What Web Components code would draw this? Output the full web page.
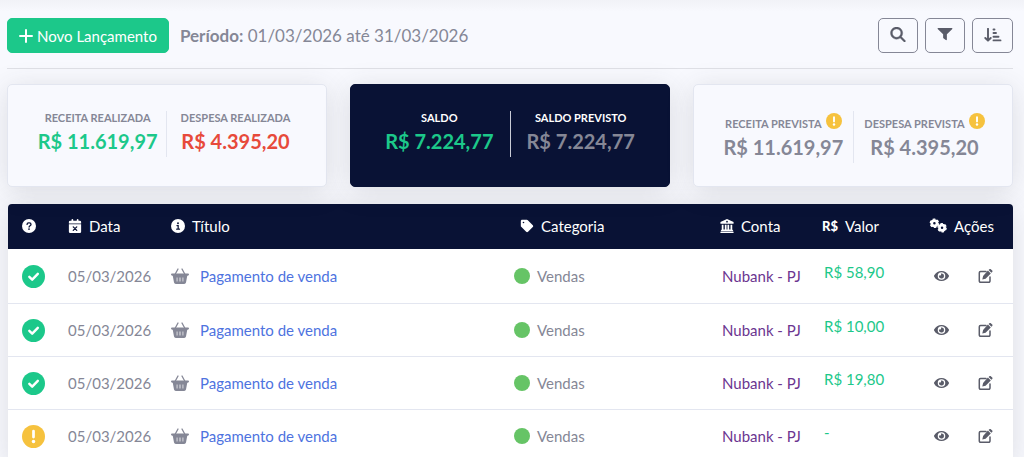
<!DOCTYPE html>
<html lang="pt-BR">
<head>
<meta charset="utf-8">
<title>Lançamentos</title>
<style>
body { margin: 0; background: #f8f9fe; font: 15px/24px Lato, "Open Sans", sans-serif; color: #858796; }
</style>
</head>
<body>
<finance-page></finance-page>
<script>
const ICONS = {
  plus: ['0 0 14 14', '<path d="M7 1v12M1 7h12" fill="none" stroke="currentColor" stroke-width="2" stroke-linecap="round"/>'],
  search: ['0 0 512 512', '<path d="M416 208c0 45.900-14.900 88.300-40 122.700L502.600 457.400c12.500 12.500 12.500 32.800 0 45.300s-32.800 12.500-45.300 0L330.700 376c-34.400 25.200-76.800 40-122.700 40C93.100 416 0 322.900 0 208S93.100 0 208 0S416 93.100 416 208zM208 352a144 144 0 1 0 0-288 144 144 0 1 0 0 288z" stroke="currentColor" stroke-width="12"/>'],
  filter: ['0 0 512 512', '<path d="M488 30H24C3 30-8 56 7 71l185 175v120c0 8 4 15 10 20l80 60c16 11 38 0 38-20V246L505 71c15-15 4-41-17-41z"/>'],
  sort: ['0 0 18 14', '<path d="M4 .8v11.500M1.300 10L4 12.700 6.700 10M9.500 1.500h1M9.500 5h2.500M9.500 8.700h5M9.500 12.400h7" fill="none" stroke="currentColor" stroke-width="1.900" stroke-linecap="round" stroke-linejoin="round"/>'],
  warn: ['0 0 16 16', '<circle cx="8" cy="8" r="8"/><path d="M8 4.200v4.200" stroke="#fff" stroke-width="1.900" stroke-linecap="round"/><circle cx="8" cy="11.500" r="1.200" fill="#fff"/>'],
  check: ['0 0 16 16', '<circle cx="8" cy="8" r="8"/><path d="M5.100 8.200l2 2L11 6.200" fill="none" stroke="#fff" stroke-width="1.700" stroke-linecap="round" stroke-linejoin="round"/>'],
  help: ['0 0 16 16', '<circle cx="8" cy="8" r="8"/><path d="M5.800 6.200c0-1 .7-1.700 1.700-1.700h1c1 0 1.800.7 1.800 1.700 0 1.500-2.200 1.600-2.200 3" fill="none" stroke="#091235" stroke-width="1.500" stroke-linecap="round"/><circle cx="8" cy="11.500" r="1" fill="#091235"/>'],
  info: ['0 0 16 16', '<circle cx="8" cy="8" r="8"/><circle cx="8" cy="4.800" r="1.100" fill="#091235"/><path d="M6.800 7.500H8.200v4M6.500 11.600h3.200" fill="none" stroke="#091235" stroke-width="1.400" stroke-linecap="round"/>'],
  calendar: ['0 0 14 16', '<path d="M3 1a1 1 0 0 1 2 0v1h4V1a1 1 0 0 1 2 0v1h1.500A1.500 1.500 0 0 1 14 3.500V5H0V3.500A1.500 1.500 0 0 1 1.500 2H3zM0 6h14v8.500a1.500 1.500 0 0 1-1.500 1.500h-11A1.500 1.500 0 0 1 0 14.500z"/><path d="M5 9l4 4M9 9l-4 4" stroke="#091235" stroke-width="1.500" stroke-linecap="round"/>'],
  tag: ['0 0 512 512', '<path fill-rule="evenodd" d="M30 252V78c0-26 21-48 48-48h174a48 48 0 0 1 34 14l182 182c19 19 19 49 0 68L294 468c-19 19-49 19-68 0L44 286a48 48 0 0 1-14-34zM128 96a30 30 0 1 0 0 60 30 30 0 1 0 0-60z"/>'],
  bank: ['0 0 16 16', '<path fill-rule="evenodd" d="M8 0l7.500 3.500V5.500H.5V3.500zM8 2a1 1 0 1 0 0 2 1 1 0 1 0 0-2zM2 6.500h2V12h1.500V6.500h2V12h1V6.500h2V12H12V6.500h2V12l1 1v1H1v-1l1-1zM.5 14.500h15V16H.5z"/>'],
  gears: ['0 0 20 16', '<g fill="none" stroke="currentColor"><circle cx="6" cy="5.500" r="2.900" stroke-width="3"/><circle cx="6" cy="5.500" r="4.600" stroke-width="1.400" stroke-dasharray="2.800 2.020"/><circle cx="14.500" cy="10.500" r="2.900" stroke-width="3"/><circle cx="14.500" cy="10.500" r="4.600" stroke-width="1.400" stroke-dasharray="2.800 2.020"/></g>'],
  basket: ['0 0 18 16', '<path d="M7 1L4 6.500M11 1l3 5.500" stroke="currentColor" stroke-width="1.300" stroke-linecap="round"/><path fill-rule="evenodd" d="M1 5.500h16a1 1 0 0 1 0 2l-.8.500-1.200 6.500A2 2 0 0 1 13 16H5a2 2 0 0 1-2-1.500L1.800 8 1 7.500a1 1 0 0 1 0-2zM5.700 9.500v4h.7v-4zM8.600 9.500v4h.8v-4zM11.600 9.500v4h.7v-4z"/>'],
  eye: ['0 0 576 512', '<path d="M572.520 241.400C518.290 135.590 410.930 64 288 64S57.680 135.640 3.480 241.410a32.350 32.350 0 0 0 0 29.190C57.710 376.410 165.070 448 288 448s230.320-71.640 284.520-177.410a32.350 32.350 0 0 0 0-29.190zM288 400a144 144 0 1 1 144-144 143.930 143.930 0 0 1-144 144zm0-240a95.310 95.310 0 0 0-25.310 3.790 47.850 47.850 0 0 1-66.900 66.900A95.780 95.780 0 1 0 288 160z"/>'],
  edit: ['0 0 14 14', '<path d="M7.500 2.500H2A1.200 1.200 0 0 0 .8 3.700v8.300A1.200 1.200 0 0 0 2 13.200h8.300a1.200 1.200 0 0 0 1.200-1.200V8" fill="none" stroke="currentColor" stroke-width="1.500" stroke-linecap="round"/><path d="M9.400 1.600l2.900 2.900-5.200 5.200-3.300.8.800-3.400zM10.100 1l.8-.8a1 1 0 0 1 1.400 0l1.400 1.400a1 1 0 0 1 0 1.400l-.8.800z"/>']
};

class AppIcon extends HTMLElement {
  connectedCallback() {
    if (this.shadowRoot) return;
    const [box, body] = ICONS[this.getAttribute('name')];
    this.attachShadow({ mode: 'open' }).innerHTML = `
      <style>
        :host { display: inline-block; flex: none; width: var(--icon-w, 14px); height: var(--icon-h, 14px); }
        svg { display: block; width: 100%; height: 100%; fill: currentColor; }
      </style>
      <svg viewBox="${box}" aria-hidden="true">${body}</svg>`;
  }
}
customElements.define('app-icon', AppIcon);

class PeriodToolbar extends HTMLElement {
  constructor() {
    super();
    this.attachShadow({ mode: 'open' }).innerHTML = `
      <style>
        :host { display: flex; align-items: center; padding-bottom: 15px; border-bottom: 1px solid #dfe0e6; }
        button { font: inherit; height: 35px; border-radius: 5px; box-sizing: border-box; display: flex; align-items: center; justify-content: center; cursor: pointer; }
        .new { background: #1cc88a; border: 1px solid #1cc88a; color: #fff; padding: 0 11px; gap: 4px; white-space: nowrap; }
        .period { flex: 1; margin: 0 11px; font-size: 17px; }
        .tools { display: flex; gap: 7px; }
        .tools button { width: 40px; background: transparent; border: 1px solid #858796; color: #5a5c69; padding: 0 0 2px; --icon-w: 16px; --icon-h: 15px; }
        .tools .sort { width: 41px; --icon-w: 18px; --icon-h: 14px; }
      </style>
      <button class="new" type="button"><app-icon name="plus"></app-icon><span>Novo Lançamento</span></button>
      <div class="period"><slot></slot></div>
      <div class="tools">
        <button type="button" aria-label="Pesquisar"><app-icon name="search"></app-icon></button>
        <button type="button" aria-label="Filtrar"><app-icon name="filter"></app-icon></button>
        <button class="sort" type="button" aria-label="Ordenar"><app-icon name="sort"></app-icon></button>
      </div>`;
  }
}
customElements.define('period-toolbar', PeriodToolbar);

class SummaryCard extends HTMLElement {
  constructor() {
    super();
    this.attachShadow({ mode: 'open' }).innerHTML = `
      <style>
        :host { display: flex; justify-content: center; align-items: flex-start; min-width: 0; box-sizing: border-box; padding: 26px 0 23px;
          background: #f8f9fe; border: 1px solid #e3e6f0; border-radius: 5px; box-shadow: 0 4px 28px rgba(58, 59, 69, .15); --divider: #e3e6f0; }
        :host([dark]) { background: #091235; border-color: #091235; --label: #fff; --divider: #c9cbd6; }
      </style>
      <slot></slot>`;
  }
}
customElements.define('summary-card', SummaryCard);

class MoneyFigure extends HTMLElement {
  constructor() {
    super();
    this.attachShadow({ mode: 'open' }).innerHTML = `
      <style>
        :host { display: block; text-align: center; white-space: nowrap; padding: 0 8px 0 14px; }
        :host(:last-child) { border-left: 1px solid var(--divider); padding: 0 20px 0 14px; }
        :host([notice]) { padding: 0 10px 0 12px; }
        :host([notice]:last-child) { padding: 0 10px; }
        :host([wide]), :host([wide]:last-child) { padding: 0 16px; }
        .label { display: flex; justify-content: center; align-items: center; gap: 4px; min-height: 14px; font-size: 11px; line-height: 14px; font-weight: 700; color: var(--label, inherit); }
        :host([notice]) .label { align-items: flex-end; height: 20px; }
        app-icon { --icon-w: 16px; --icon-h: 16px; color: #f6c23e; align-self: flex-start; margin-top: 2px; }
        .value { font-size: 20px; line-height: 24px; font-weight: 700; padding: 4px 0; color: var(--value, inherit); }
        :host([tone="in"]) { --value: #1cc88a; }
        :host([tone="out"]) { --value: #e74a3b; }
      </style>
      <div class="label"><slot name="label"></slot>${this.hasAttribute('notice') ? '<app-icon name="warn"></app-icon>' : ''}</div>
      <div class="value"><slot></slot></div>`;
  }
}
customElements.define('money-figure', MoneyFigure);

const ENTRIES = [
  ['check', 'R$ 58,90'],
  ['check', 'R$ 10,00'],
  ['check', 'R$ 19,80'],
  ['warn', '-']
];

class EntryTable extends HTMLElement {
  constructor() {
    super();
    const row = ([status, value]) => `
      <tr>
        <td><app-icon class="${status}" name="${status}"></app-icon></td>
        <td>05/03/2026</td>
        <td><div class="line title"><app-icon name="basket"></app-icon><a href="#">Pagamento de venda</a></div></td>
        <td><div class="line"><i class="dot"></i>Vendas</div></td>
        <td class="account">Nubank - PJ</td>
        <td class="value">${value}</td>
        <td><div class="line actions">
          <button type="button" aria-label="Visualizar"><app-icon name="eye"></app-icon></button>
          <button type="button" aria-label="Editar"><app-icon name="edit"></app-icon></button>
        </div></td>
      </tr>`;
    this.attachShadow({ mode: 'open' }).innerHTML = `
      <style>
        :host { display: block; border-radius: 4px 4px 0 0; background: #fff; box-shadow: 0 4px 28px rgba(58, 59, 69, .15); }
        table { width: 100%; table-layout: fixed; border-collapse: separate; border-spacing: 0; }
        col.status { width: 52px; } col.date { width: 103px; } col.category { width: 206px; }
        col.account { width: 102px; } col.value { width: 105px; } col.actions { width: 94px; }
        th, td { text-align: left; white-space: nowrap; box-sizing: border-box; padding: 0 0 0 8px; }
        th { height: 45px; background: #091235; color: #fff; font-weight: 400; padding-bottom: 2px; }
        th:first-child { border-top-left-radius: 4px; padding-left: 14px; }
        th:last-child { border-top-right-radius: 4px; padding-left: 10px; }
        th:nth-child(4) { padding-left: 14px; }
        td { height: 53px; border-bottom: 1px solid #e3e6f0; }
        tr:first-child td { height: 55px; }
        td:first-child { padding-left: 14px; }
        td.account { color: #6b3590; padding-left: 10px; }
        td.value { color: #1cc88a; padding: 0 0 8px 10px; }
        .line { display: flex; align-items: center; gap: 7px; }
        th .line { --icon-w: 14px; --icon-h: 14px; }
        th .gears { --icon-w: 18px; --icon-h: 15px; }
        .real { font-size: 13px; font-weight: 900; }
        td .check, td .warn { display: block; --icon-w: 23px; --icon-h: 23px; color: #1cc88a; }
        td .warn { color: #f6c23e; }
        .title { gap: 11px; --icon-w: 18px; --icon-h: 16px; }
        a { color: #4e73df; text-decoration: none; }
        .dot { width: 16px; height: 16px; border-radius: 50%; background: #66c466; }
        .actions { gap: 29px; padding-left: 7px; }
        button { border: 0; padding: 0; background: none; color: #5a5c69; display: flex; cursor: pointer; --icon-w: 15px; --icon-h: 14px; }
      </style>
      <table>
        <colgroup><col class="status"><col class="date"><col><col class="category"><col class="account"><col class="value"><col class="actions"></colgroup>
        <thead><tr>
          <th scope="col" aria-label="Situação"><div class="line"><app-icon name="help"></app-icon></div></th>
          <th scope="col"><div class="line"><app-icon name="calendar"></app-icon>Data</div></th>
          <th scope="col"><div class="line"><app-icon name="info"></app-icon>Título</div></th>
          <th scope="col"><div class="line"><app-icon name="tag"></app-icon>Categoria</div></th>
          <th scope="col"><div class="line"><app-icon name="bank"></app-icon>Conta</div></th>
          <th scope="col"><div class="line"><span class="real">R$</span>Valor</div></th>
          <th scope="col"><div class="line gears"><app-icon name="gears"></app-icon>Ações</div></th>
        </tr></thead>
        <tbody>${ENTRIES.map(row).join('')}</tbody>
      </table>`;
  }
}
customElements.define('entry-table', EntryTable);

class FinancePage extends HTMLElement {
  constructor() {
    super();
    this.attachShadow({ mode: 'open' }).innerHTML = `
      <style>
        :host { display: block; padding: 18px 11px 0 7px; background: linear-gradient(#f1f2f7, #f8f9fe 12px); }
        .cards { display: grid; grid-template-columns: repeat(3, minmax(0, 1fr)); gap: 23px; margin: 15px 0 17px; }
        .entries { padding-left: 1px; }
      </style>
      <period-toolbar><b>Período:</b> 01/03/2026 até 31/03/2026</period-toolbar>
      <section class="cards">
        <summary-card>
          <money-figure tone="in"><span slot="label">RECEITA REALIZADA</span>R$ 11.619,97</money-figure>
          <money-figure tone="out"><span slot="label">DESPESA REALIZADA</span>R$ 4.395,20</money-figure>
        </summary-card>
        <summary-card dark>
          <money-figure tone="in" wide><span slot="label">SALDO</span>R$ 7.224,77</money-figure>
          <money-figure wide><span slot="label">SALDO PREVISTO</span>R$ 7.224,77</money-figure>
        </summary-card>
        <summary-card>
          <money-figure notice><span slot="label">RECEITA PREVISTA</span>R$ 11.619,97</money-figure>
          <money-figure notice><span slot="label">DESPESA PREVISTA</span>R$ 4.395,20</money-figure>
        </summary-card>
      </section>
      <section class="entries"><entry-table></entry-table></section>`;
  }
}
customElements.define('finance-page', FinancePage);
</script>
</body>
</html>
